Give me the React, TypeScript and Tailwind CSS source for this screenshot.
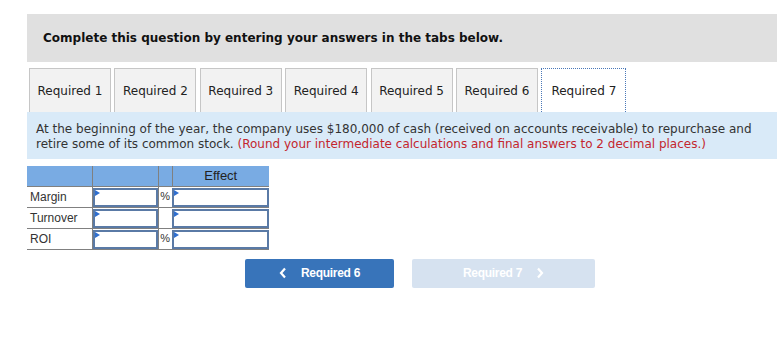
import React from 'react';

const tabs = ['Required 1', 'Required 2', 'Required 3', 'Required 4', 'Required 5', 'Required 6', 'Required 7'];

const rows = [
  { label: 'Margin', pct: true },
  { label: 'Turnover', pct: false },
  { label: 'ROI', pct: true },
];

function Flag() {
  return (
    <span className="absolute left-0 top-0 w-0 h-0 border-t-[3px] border-b-[3px] border-l-[5px] border-t-transparent border-b-transparent border-l-[#2f6fd0]" />
  );
}

function AnswerInput() {
  return (
    <div className="relative h-[19px] border-2 border-[#5a7aa6] bg-white">
      <Flag />
    </div>
  );
}

export default function App() {
  return (
    <div className="min-h-screen bg-white pl-[27px] pt-[14px] font-['DejaVu_Sans',Verdana,sans-serif]">
      <div className="h-[48px] bg-[#e0e0e0] flex items-center pl-[16px]">
        <h2 className="text-[12px] font-bold text-[#111]">Complete this question by entering your answers in the tabs below.</h2>
      </div>

      <div className="flex gap-[3.4px] pl-[2px] mt-[6px]">
        {tabs.map((t, i) =>
          i === tabs.length - 1 ? (
            <div
              key={t}
              className="w-[85px] h-[44px] flex items-center justify-center bg-white border border-b-0 border-dotted border-[#4a78b8] text-[12px] text-[#222]"
            >
              {t}
            </div>
          ) : (
            <div
              key={t}
              className="w-[82px] h-[44px] flex items-center justify-center bg-[#f2f2f2] border border-b-0 border-[#c6c6c6] text-[12px] text-[#222]"
            >
              {t}
            </div>
          )
        )}
      </div>

      <div className="bg-[#d9eaf8] px-[9px] pt-[10px] pb-[7px] text-[12px] leading-[15px] text-[#333]">
        <p>
          At the beginning of the year, the company uses $180,000 of cash (received on accounts receivable) to repurchase and
          retire some of its common stock.{' '}
          <span className="text-[#c4262e]">(Round your intermediate calculations and final answers to 2 decimal places.)</span>
        </p>
      </div>

      <table className="mt-[7px] border-collapse font-['Liberation_Sans',Arial,sans-serif] text-[12px] text-[#333]">
        <thead>
          <tr className="bg-[#79abe3] h-[20px]">
            <th className="w-[65px] border-r border-[#808080] p-0" />
            <th className="w-[66px] border-r border-[#808080] p-0" />
            <th className="w-[14px] border-r border-[#808080] p-0" />
            <th className="w-[97px] p-0 font-normal text-[13px] text-[#222] text-center">Effect</th>
          </tr>
        </thead>
        <tbody>
          {rows.map((r) => (
            <tr key={r.label} className="h-[21px] border-t border-b border-[#808080]">
              <td className="border-r border-[#808080] pl-[3px] py-0">{r.label}</td>
              <td className="p-0 pt-[1px]">
                <AnswerInput />
              </td>
              <td className="p-0 text-center text-[11px] border-l border-[#808080] bg-white">{r.pct ? '%' : ''}</td>
              <td className="p-0 pt-[1px]">
                <AnswerInput />
              </td>
            </tr>
          ))}
        </tbody>
      </table>

      <div className="flex mt-[9px] pl-[218px] gap-[18px] font-['Liberation_Sans',Arial,sans-serif]">
        <button className="w-[149px] h-[29px] bg-[#3874ba] rounded-[2px] flex items-center justify-center gap-[14px] text-white text-[12px] font-bold">
          <svg width="8" height="12" viewBox="0 0 8 12" fill="none" stroke="currentColor" strokeWidth="2.2">
            <path d="M6 1.5 L2 6 L6 10.5" />
          </svg>
          <span className="tracking-[-0.3px]">Required 6</span>
        </button>
        <button className="w-[183px] h-[29px] bg-[#d6e2f0] rounded-[2px] flex items-center justify-center gap-[14px] text-white text-[12px] font-bold">
          <span className="tracking-[-0.3px]">Required 7</span>
          <svg width="8" height="12" viewBox="0 0 8 12" fill="none" stroke="currentColor" strokeWidth="2.2">
            <path d="M2 1.5 L6 6 L2 10.5" />
          </svg>
        </button>
      </div>
    </div>
  );
}
